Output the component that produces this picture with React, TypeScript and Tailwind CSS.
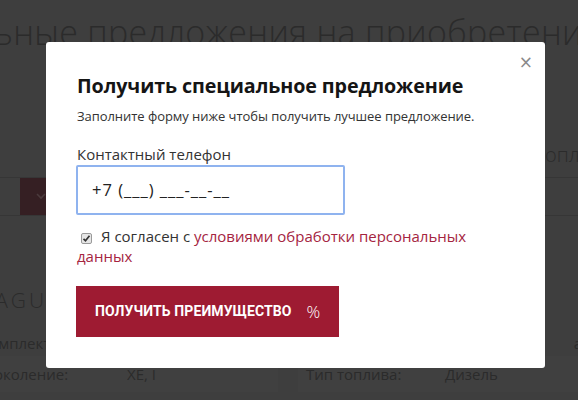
import React from "react";

export default function App() {
  return (
    <div className="relative w-[578px] h-[400px] overflow-hidden bg-[#3e3e3e] font-['Open_Sans',sans-serif]">
      {/* background page (dimmed) */}
      <div className="flex flex-col text-[#2b2b2b]">
        <div className="h-[62px] pt-[12px] whitespace-nowrap ml-[-146px] text-[34px] font-light tracking-[0.3px] leading-[40px]">
          Специальные предложения на приобретение
        </div>
        <div className="h-[115px] flex justify-end items-start pt-[80px]">
          <div className="w-[33px] overflow-hidden whitespace-nowrap text-[20px] leading-[26px] font-light">опл</div>
        </div>
        <div className="h-[39px] border-y border-[#363636] flex">
          <div className="w-[20px]" />
          <div className="w-[120px] bg-[#351f23] flex items-center pl-[16px]">
            <svg width="10" height="7" viewBox="0 0 10 7"><path d="M1 1l4 4 4-4" stroke="#4a3a3c" strokeWidth="1.6" fill="none" /></svg>
          </div>
        </div>
        <div className="h-[96px] flex items-end pb-[1px]">
          <div className="ml-[-13px] text-[21px] tracking-[3px] font-light leading-[21px]">JAGUAR</div>
        </div>
        <div className="h-[44px] flex items-center justify-between text-[15px] pt-[18px]">
          <span className="ml-[-20px]">Комплектация:</span>
          <span className="mr-[-4px]">а</span>
        </div>
        <div className="h-[36px] flex text-[15px]">
          <div className="w-[278px] bg-[#404040] flex items-center">
            <span className="ml-[-17px] w-[144px]">Поколение:</span>
            <span>XE, I</span>
          </div>
          <div className="w-[20px]" />
          <div className="flex-1 bg-[#404040] flex items-center pl-[8px]">
            <span className="w-[139px]">Тип топлива:</span>
            <span>Дизель</span>
          </div>
        </div>
      </div>

      {/* modal */}
      <div className="absolute left-[46px] top-[42px] w-[499px] h-[326px] bg-white rounded-[3px] px-[31px] pt-[30px]">
        <button className="absolute right-[12px] top-[11px] text-[#8a8a8a] text-[17px] leading-[18px] font-['DejaVu_Sans',sans-serif]">×</button>
        <h2 className="text-[19.7px] font-bold text-[#151515] leading-[28px] tracking-[-0.1px]">
          Получить специальное предложение
        </h2>
        <p className="mt-[7px] text-[13px] leading-[18px] text-[#333] tracking-[-0.05px]">
          Заполните форму ниже чтобы получить лучшее предложение.
        </p>
        <div className="mt-[19px] text-[15px] leading-[20px] text-[#333]">Контактный телефон</div>
        <div className="mt-[1px] ml-[-1px] w-[269px] h-[50px] border-2 border-[#8fb3ef] rounded-[2px] flex items-center pl-[14px] text-[16.5px] tracking-[1px] text-[#222]">
          +7 (___) ___-__-__
        </div>
        <div className="mt-[11px] text-[15px] leading-[20px] text-[#333] pr-[40px]">
          <span className="inline-flex align-[-1px] ml-[4px] mr-[9px] w-[11px] h-[11px] border border-[#9a9a9a] rounded-[2px] bg-[#e6e6e6] items-center justify-center">
            <svg width="9" height="9" viewBox="0 0 9 9"><path d="M1.5 4.8l2 2 4-5" stroke="#333" strokeWidth="1.7" fill="none" /></svg>
          </span>
          Я согласен с <span className="text-[#a5253f]">условиями обработки персональных данных</span>
        </div>
        <button className="mt-[20px] ml-[-1px] w-[263px] h-[51px] bg-[#9e1b32] text-white flex items-center pl-[19px]">
          <span className="text-[14px] font-bold tracking-[0.1px] font-['Roboto',sans-serif]">ПОЛУЧИТЬ ПРЕИМУЩЕСТВО</span>
          <span className="ml-[15px] text-[17px] font-light leading-none">%</span>
        </button>
      </div>
    </div>
  );
}
